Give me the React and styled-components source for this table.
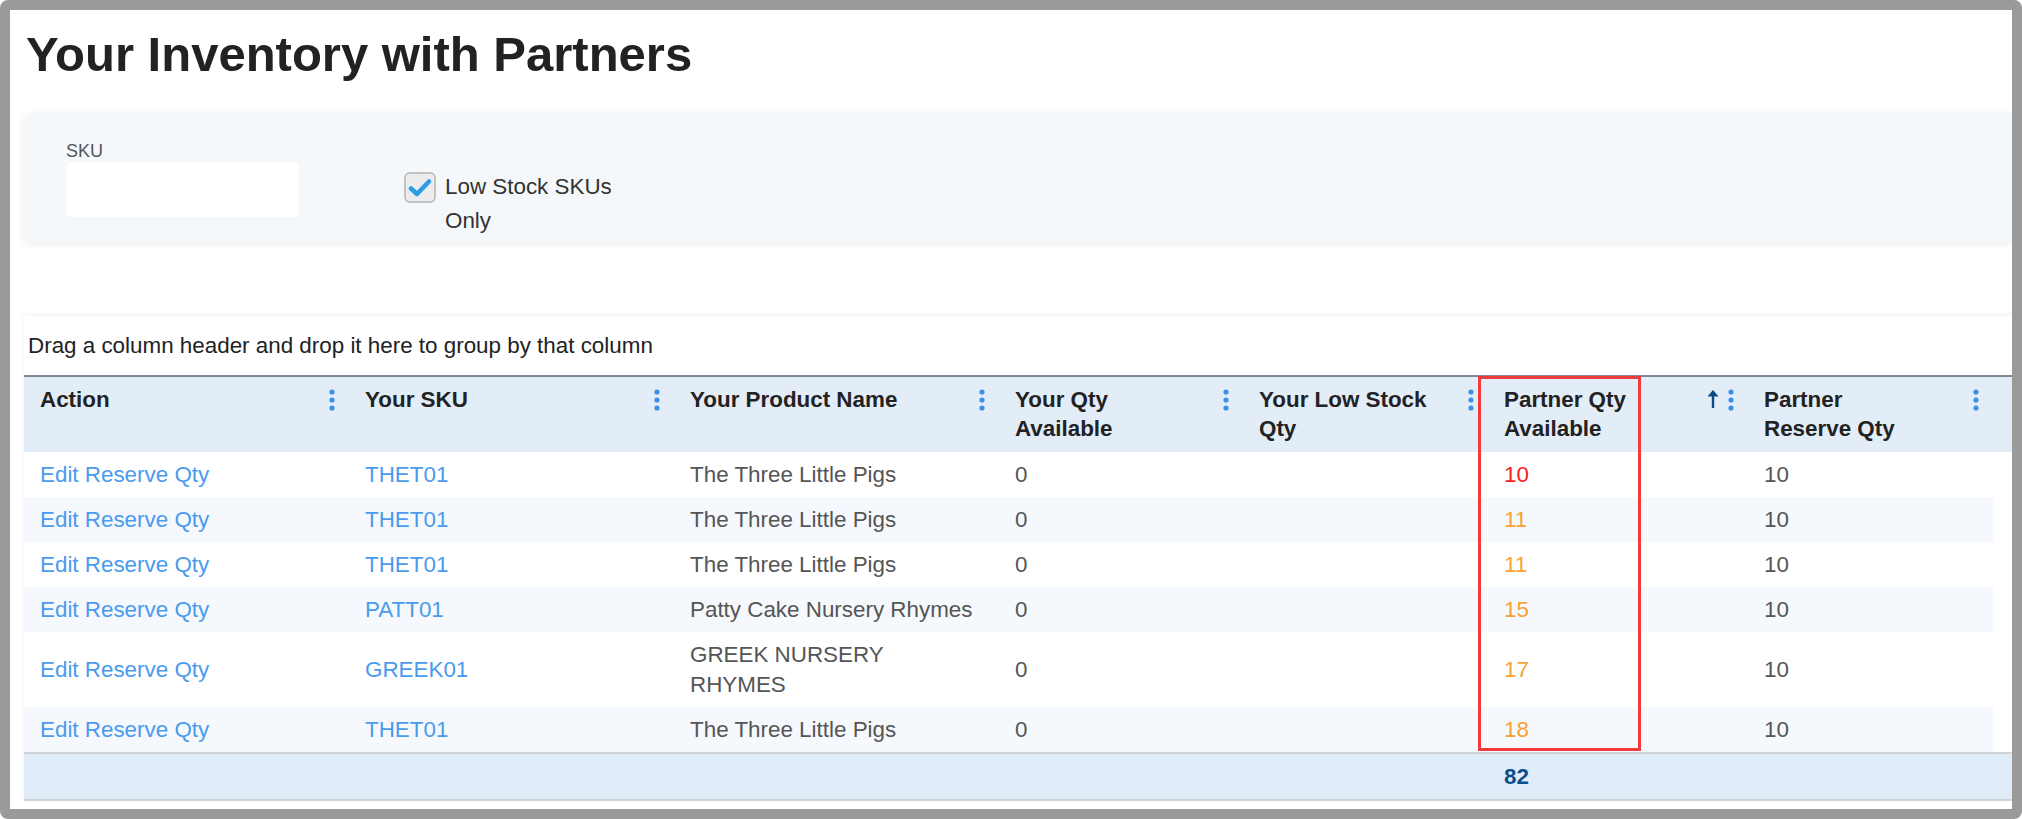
import React from 'react'
import styled, { createGlobalStyle } from 'styled-components'

const GlobalStyle = createGlobalStyle`
  body {
    margin: 0;
    font-family: "Liberation Sans", Arial, sans-serif;
    background: #ffffff;
  }
`

const COLS = '325px 325px 325px 244px 245px 260px 1fr'

const columns = [
    { lines: ['Action'] },
    { lines: ['Your SKU'] },
    { lines: ['Your Product Name'] },
    { lines: ['Your Qty', 'Available'] },
    { lines: ['Your Low Stock', 'Qty'] },
    { lines: ['Partner Qty', 'Available'], sorted: true },
    { lines: ['Partner', 'Reserve Qty'] },
]

const rows = [
    { sku: 'THET01', name: 'The Three Little Pigs', qty: 10, low: true },
    { sku: 'THET01', name: 'The Three Little Pigs', qty: 11 },
    { sku: 'THET01', name: 'The Three Little Pigs', qty: 11 },
    { sku: 'PATT01', name: 'Patty Cake Nursery Rhymes', qty: 15 },
    { sku: 'GREEK01', name: 'GREEK NURSERY RHYMES', qty: 17 },
    { sku: 'THET01', name: 'The Three Little Pigs', qty: 18 },
]

const Kebab = () => (
    <KebabIcon width="6" height="22" viewBox="0 0 6 22">
        <circle cx="3" cy="3" r="2.6" fill="#3d8fe3" />
        <circle cx="3" cy="11" r="2.6" fill="#3d8fe3" />
        <circle cx="3" cy="19" r="2.6" fill="#3d8fe3" />
    </KebabIcon>
)

const SortArrow = () => (
    <ArrowIcon width="12" height="18" viewBox="0 0 12 18">
        <path d="M6 0 L11.5 6.5 H0.5 Z" fill="#0e4a82" />
        <rect x="4.8" y="5" width="2.4" height="13" fill="#0e4a82" />
    </ArrowIcon>
)

const App = () => {
    const total = rows.reduce((sum, r) => sum + r.qty, 0)

    return (
        <Frame>
            <GlobalStyle />
            <Title>Your Inventory with Partners</Title>

            <FilterPanel>
                <Field>
                    <FieldLabel>SKU</FieldLabel>
                    <TextInput type="text" />
                </Field>
                <CheckGroup>
                    <CheckBox>
                        <svg width="24" height="20" viewBox="0 0 24 20">
                            <path d="M3 10.5 L9 16 L21 3.5" fill="none" stroke="#2a9de9" strokeWidth="4.5" strokeLinecap="round" strokeLinejoin="round" />
                        </svg>
                    </CheckBox>
                    <CheckText>Low Stock SKUs Only</CheckText>
                </CheckGroup>
            </FilterPanel>

            <Grid>
                <GroupPanel>Drag a column header and drop it here to group by that column</GroupPanel>

                <HeaderRow>
                    {columns.map((c, i) => (
                        <HeaderCell key={i}>
                            <HeaderTitle>
                                {c.lines.map((l) => <span key={l}>{l}</span>)}
                            </HeaderTitle>
                            {c.sorted && <SortArrow />}
                            <Kebab />
                        </HeaderCell>
                    ))}
                </HeaderRow>

                {rows.map((r, i) => (
                    <Row key={i} $alt={i % 2 === 1}>
                        <Cell><Link>Edit Reserve Qty</Link></Cell>
                        <Cell><Link>{r.sku}</Link></Cell>
                        <Cell>{r.name}</Cell>
                        <Cell>0</Cell>
                        <Cell />
                        <Cell $color={r.low ? '#f41c1c' : '#f7a331'}>{r.qty}</Cell>
                        <Cell>10</Cell>
                    </Row>
                ))}

                <FooterRow>
                    <FooterCell />
                    <FooterCell />
                    <FooterCell />
                    <FooterCell />
                    <FooterCell />
                    <FooterCell>{total}</FooterCell>
                    <FooterCell />
                </FooterRow>

                <Highlight />
            </Grid>
        </Frame>
    )
}

export default App

const Frame = styled.div`
    box-sizing: border-box;
    width: 2022px;
    height: 819px;
    border: 10px solid #9a9a9a;
    border-radius: 8px;
    background: #ffffff;
    padding: 16px 0 0 14px;
    overflow: hidden;
    display: flex;
    flex-direction: column;
`

const Title = styled.h1`
    margin: 1px 0 0 2px;
    font-size: 49px;
    line-height: 54px;
    font-weight: bold;
    color: #222;
`

const FilterPanel = styled.div`
    margin-top: 32px;
    height: 129px;
    box-sizing: border-box;
    padding: 27px 0 0 42px;
    background: #f5f8fb;
    border-radius: 6px 0 0 6px;
    box-shadow: 0 2px 7px rgba(0, 0, 0, 0.08);
    display: flex;
    align-items: flex-start;
`

const Field = styled.div`
    display: flex;
    flex-direction: column;
`

const FieldLabel = styled.label`
    font-size: 18px;
    line-height: 22px;
    color: #555;
`

const TextInput = styled.input`
    width: 233px;
    height: 55px;
    box-sizing: border-box;
    border: none;
    border-radius: 6px;
    background: #ffffff;
    outline: none;
`

const CheckGroup = styled.div`
    margin: 30px 0 0 105px;
    display: flex;
    align-items: flex-start;
    gap: 9px;
`

const CheckBox = styled.span`
    margin-top: 2px;
    width: 32px;
    height: 31px;
    box-sizing: border-box;
    border: 2px solid #c2c2c2;
    border-radius: 6px;
    background: #ececec;
    display: flex;
    align-items: center;
    justify-content: center;
`

const CheckText = styled.span`
    max-width: 180px;
    font-size: 22.4px;
    line-height: 33.5px;
    color: #333;
`

const Grid = styled.div`
    position: relative;
    margin-top: 74px;
    font-size: 22.4px;
    line-height: 29.2px;
    box-shadow: 0 -2px 5px rgba(0, 0, 0, 0.05);
`

const GroupPanel = styled.div`
    padding: 15px 4px;
    color: #222;
`

const HeaderRow = styled.div`
    display: grid;
    grid-template-columns: ${COLS};
    padding-right: 19px;
    border-top: 2px solid #7f8896;
    background: #e3edf8;
`

const HeaderCell = styled.div`
    display: flex;
    align-items: flex-start;
    gap: 9px;
    padding: 8px 14px 8px 16px;
    font-weight: bold;
    color: #222;
`

const HeaderTitle = styled.div`
    flex: 1;
    display: flex;
    flex-direction: column;
    white-space: nowrap;
`

const KebabIcon = styled.svg`
    margin-top: 4px;
    flex: none;
`

const ArrowIcon = styled.svg`
    margin-top: 5px;
    flex: none;
`

const Row = styled.div`
    display: grid;
    grid-template-columns: ${COLS};
    align-items: center;
    margin-right: 19px;
    background: ${(p) => (p.$alt ? '#f5f8fc' : '#ffffff')};
`

const Cell = styled.div`
    padding: 8px 16px;
    color: ${(p) => p.$color || '#555'};
    min-height: 29.2px;
`

const Link = styled.span`
    color: #4a9bee;
    cursor: pointer;
`

const FooterRow = styled.div`
    display: grid;
    grid-template-columns: ${COLS};
    border-top: 2px solid #cfd3d8;
    border-bottom: 2px solid #cfd3d8;
    background: #e1ecf9;
`

const FooterCell = styled.div`
    padding: 8px 16px;
    min-height: 29.2px;
    font-weight: bold;
    color: #0c4e8a;
`

const Highlight = styled.div`
    position: absolute;
    left: 1454px;
    top: 60px;
    width: 163px;
    height: 375px;
    box-sizing: border-box;
    border: 3px solid #f23a3a;
    pointer-events: none;
`
